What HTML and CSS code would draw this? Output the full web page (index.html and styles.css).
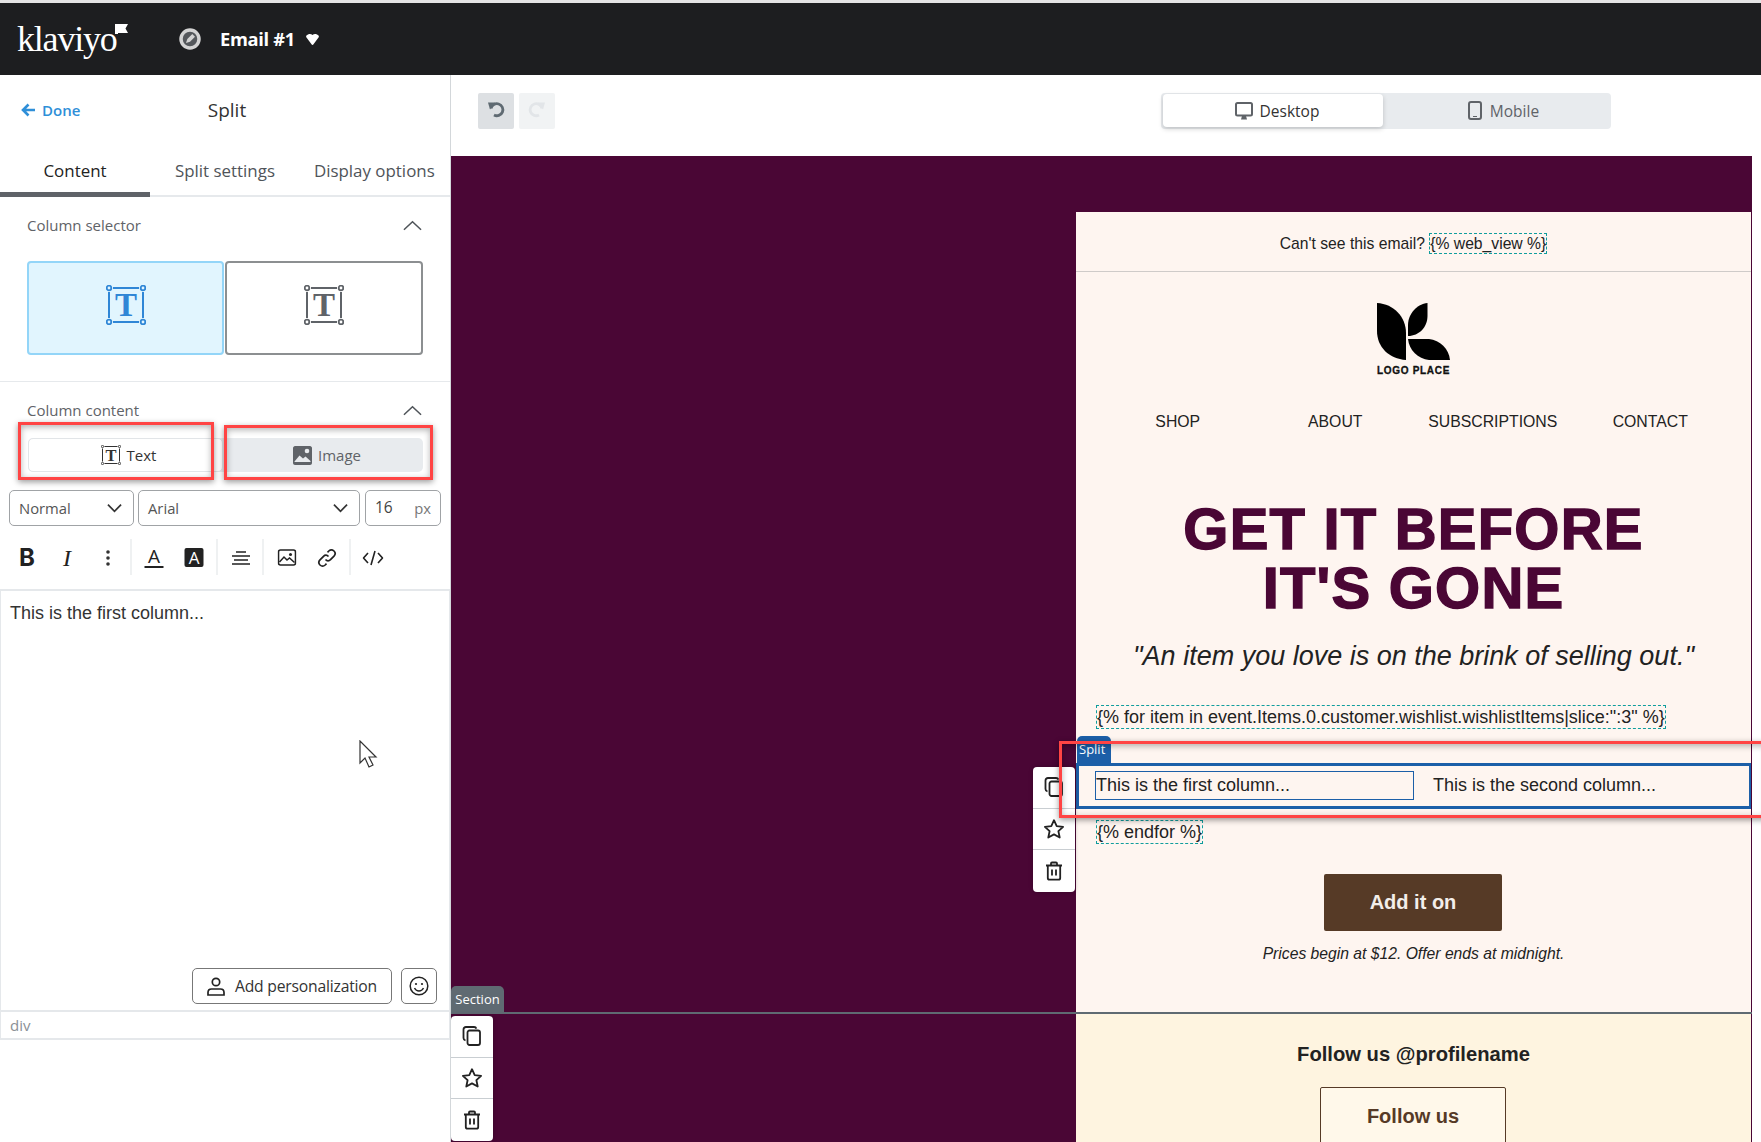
FILE: index.html
```html
<!DOCTYPE html>
<html>
<head>
    <meta charset="utf-8">
    <title>Email #1 - Klaviyo</title>
    <link rel="stylesheet" href="styles.css">
</head>
<body>
    <svg class="defs" width="0" height="0">
        <symbol id="i-tframe" viewBox="0 0 40 40">
            <g fill="none" stroke="currentColor" stroke-width="1.8">
                <circle cx="3" cy="3" r="2.300"/><circle cx="37" cy="3" r="2.300"/>
                <circle cx="3" cy="37" r="2.300"/><circle cx="37" cy="37" r="2.300"/>
                <path d="M7 3h26M7 37h26M3 7v26M37 7v26" stroke-width="2"/>
            </g>
        </symbol>
        <symbol id="i-copy" viewBox="0 0 20 20">
            <g fill="none" stroke="currentColor" stroke-width="1.8">
                <rect x="5.500" y="4.500" width="12.500" height="14.500" rx="2"/>
                <path d="M3.500 14.500C2 14 1.500 13 1.500 12V3.500C1.500 2 2.500 1 4 1h8c1 0 2 .5 2.400 1.600"/>
            </g>
        </symbol>
        <symbol id="i-star" viewBox="0 0 20 20">
            <path d="M10 1.200l2.700 5.900 6.400.7-4.700 4.400 1.300 6.300L10 15.400l-5.700 3.100 1.300-6.300L.9 7.800l6.400-.7z" fill="none" stroke="currentColor" stroke-width="1.800" stroke-linejoin="round"/>
        </symbol>
        <symbol id="i-trash" viewBox="0 0 20 20">
            <g fill="none" stroke="currentColor" stroke-width="1.8">
                <path d="M2 4.500h16M7 4.500V2.500c0-.6.400-1 1-1h4c.6 0 1 .4 1 1v2M3.800 4.500V17c0 1 .7 1.700 1.700 1.700h9c1 0 1.700-.7 1.700-1.700V4.500M8 8.500v6M12 8.500v6"/>
            </g>
        </symbol>
        <symbol id="i-chevron" viewBox="0 0 20 11">
            <path d="M1 10l9-8.500 9 8.500" fill="none" stroke="currentColor" stroke-width="1.600"/>
        </symbol>
        <symbol id="i-down" viewBox="0 0 16 10">
            <path d="M1 1.500l7 7 7-7" fill="none" stroke="currentColor" stroke-width="1.800"/>
        </symbol>
    </svg>

    <header class="topbar">
        <div class="brand">
            <span class="brand-name">klaviyo</span>
            <svg class="brand-flag" width="13" height="10" viewBox="0 0 13 10"><path d="M0 0h13l-2.500 4.500L13 9H3v1H0z" fill="#fff"/></svg>
        </div>
        <svg class="compass" width="22" height="22" viewBox="0 0 22 22">
            <circle cx="11" cy="11" r="9" fill="#55585c" stroke="#d4d4d4" stroke-width="3.500"/>
            <path d="M7 15l1.300-4 5-5 2.700 2.700-5 5z" fill="#d4d4d4"/>
        </svg>
        <span class="doc-name">Email #1</span>
        <svg width="13" height="11" viewBox="0 0 13 11"><path d="M2.500.3C3.800-.2 5.500.1 6.500 1c1-.9 2.700-1.200 4-.7 1.700.6 2.900 1.700 2.200 3L7.500 10.300c-.5.900-1.500.9-2 0L.3 3.300C-.4 2 .8.900 2.500.3z" fill="#fff"/></svg>
    </header>

    <div class="workspace">
        <aside class="panel">
            <div class="panel-head">
                <a class="done">
                    <svg width="15" height="14" viewBox="0 0 15 14"><path d="M14 7H2.500M7.500 1.500L2 7l5.500 5.500" fill="none" stroke="currentColor" stroke-width="2.600"/></svg>
                    Done
                </a>
                <h1 class="panel-title">Split</h1>
            </div>
            <nav class="tabs">
                <span class="tab tab-on">Content</span>
                <span class="tab tab-split">Split settings</span>
                <span class="tab tab-display">Display options</span>
            </nav>

            <section class="group group-columns">
                <div class="group-title">
                    <span>Column selector</span>
                    <svg width="19" height="11"><use href="#i-chevron"/></svg>
                </div>
                <div class="col-picker">
                    <div class="col-box col-box-on">
                        <svg width="40" height="40" viewBox="0 0 40 40"><use href="#i-tframe" width="40" height="40"/><text class="t-mark" x="20" y="31">T</text></svg>
                    </div>
                    <div class="col-box">
                        <svg width="40" height="40" viewBox="0 0 40 40"><use href="#i-tframe" width="40" height="40"/><text class="t-mark" x="20" y="31">T</text></svg>
                    </div>
                </div>
            </section>

            <section class="group group-content">
                <div class="group-title group-title-b">
                    <span>Column content</span>
                    <svg width="19" height="11"><use href="#i-chevron"/></svg>
                </div>
                <div class="kind">
                    <div class="kind-btn kind-on">
                        <svg width="20" height="20" viewBox="0 0 40 40"><use href="#i-tframe" width="40" height="40"/><text class="t-mark" x="20" y="31">T</text></svg>
                        Text
                    </div>
                    <div class="kind-btn">
                        <svg width="19" height="19" viewBox="0 0 19 19"><path d="M2 0h15c1 0 2 1 2 2v15c0 1-1 2-2 2H2c-1 0-2-1-2-2V2C0 1 1 0 2 0z" fill="#5f6368"/><path d="M1.500 15.500l5-6 3.500 3 2.500-2 5 4.500v1H1.500z" fill="#e8ebee"/><circle cx="14" cy="5" r="2.300" fill="#e8ebee"/></svg>
                        Image
                    </div>
                </div>
            </section>

            <div class="selects">
                <div class="select select-style"><span>Normal</span><svg width="15" height="10"><use href="#i-down"/></svg></div>
                <div class="select select-font"><span>Arial</span><svg width="15" height="10"><use href="#i-down"/></svg></div>
                <div class="select select-size"><span>16</span><span class="unit">px</span></div>
            </div>

            <div class="format">
                <span class="fmt fmt-b">B</span>
                <span class="fmt fmt-i">I</span>
                <svg class="fmt-more" width="4" height="16" viewBox="0 0 4 16"><circle cx="2" cy="2" r="1.800"/><circle cx="2" cy="8" r="1.800"/><circle cx="2" cy="14" r="1.800"/></svg>
                <i class="fmt-sep"></i>
                <span class="fmt-color">A</span>
                <span class="fmt-fill">A</span>
                <i class="fmt-sep sep-b"></i>
                <svg class="fmt-align" width="18" height="14" viewBox="0 0 18 14"><path d="M4 1h10M0 5h18M2 9h14M0 13h18" stroke="#222" stroke-width="1.600"/></svg>
                <i class="fmt-sep sep-c"></i>
                <svg class="fmt-img" width="19" height="17" viewBox="0 0 19 17"><rect x="1" y="1" width="17" height="15" rx="2" fill="none" stroke="#222" stroke-width="1.600"/><path d="M2 13l4.500-5 3 3 2.500-2 5 4.500" fill="none" stroke="#222" stroke-width="1.500"/><circle cx="13" cy="5.500" r="1.500" fill="#222"/></svg>
                <svg class="fmt-link" width="20" height="20" viewBox="0 0 20 20"><path d="M8.500 11.500c1.500 1.700 3.500 1.700 5 .2l3.500-3.500c1.400-1.500 1.400-3.700 0-5.200-1.500-1.400-3.700-1.400-5.200 0L10.500 4.300M11.500 8.500c-1.500-1.700-3.500-1.700-5-.2L3 11.800c-1.400 1.500-1.400 3.700 0 5.200 1.500 1.400 3.700 1.400 5.200 0l1.300-1.300" fill="none" stroke="#222" stroke-width="1.700"/></svg>
                <i class="fmt-sep sep-d"></i>
                <svg class="fmt-code" width="21" height="16" viewBox="0 0 21 16"><path d="M5.500 3L1 8l4.500 5M15.500 3L20 8l-4.500 5M12.500 1L8.500 15" fill="none" stroke="#222" stroke-width="1.600"/></svg>
            </div>

            <div class="editor">
                <div class="editor-body">
                    <p class="editor-text">This is the first column...</p>
                    <div class="editor-actions">
                        <span class="btn-person">
                            <svg width="18" height="19" viewBox="0 0 18 19"><circle cx="9" cy="5" r="3.700" fill="none" stroke="#222" stroke-width="1.700"/><path d="M1 18v-2.500c0-2 1.500-3.500 3.500-3.500h9c2 0 3.500 1.500 3.500 3.500V18z" fill="none" stroke="#222" stroke-width="1.700"/></svg>
                            Add personalization
                        </span>
                        <span class="btn-emoji">
                            <svg width="20" height="20" viewBox="0 0 20 20"><circle cx="10" cy="10" r="8.800" fill="none" stroke="#222" stroke-width="1.500"/><circle cx="7" cy="8" r="1.100" fill="#222"/><circle cx="13" cy="8" r="1.100" fill="#222"/><path d="M5.500 12c1 2 2.700 3 4.500 3s3.500-1 4.500-3" fill="none" stroke="#222" stroke-width="1.400"/></svg>
                        </span>
                    </div>
                </div>
                <div class="editor-path">div</div>
            </div>
        </aside>

        <main class="stage">
            <div class="stage-bar">
                <span class="hist hist-on">
                    <svg width="18" height="18" viewBox="0 0 18 18"><path d="M4 7.500A6 6 0 1 1 7 14" fill="none" stroke="#5f6a72" stroke-width="2.800"/><path d="M1 1.500h7L3 8.500z" fill="#5f6a72"/></svg>
                </span>
                <span class="hist">
                    <svg width="18" height="18" viewBox="0 0 18 18"><path d="M14 7.500A6 6 0 1 0 11 14" fill="none" stroke="#e2e5e8" stroke-width="2.800"/><path d="M17 1.500h-7l5 7z" fill="#e2e5e8"/></svg>
                </span>
                <div class="device">
                    <span class="device-tab device-on">
                        <svg width="18" height="18" viewBox="0 0 18 18"><rect x="1" y="1" width="16" height="12.500" rx="1.500" fill="none" stroke="#5f6368" stroke-width="2"/><path d="M6 17.500h6l-1-3.500H7z" fill="#5f6368"/></svg>
                        Desktop
                    </span>
                    <span class="device-tab device-off">
                        <svg width="14" height="19" viewBox="0 0 14 19"><rect x="1" y="1" width="12" height="17" rx="2" fill="none" stroke="#5f6368" stroke-width="2"/><path d="M5 15.500h4" stroke="#5f6368"/></svg>
                        Mobile
                    </span>
                </div>
            </div>

            <div class="canvas">
                <div class="canvas-row row-main">
                    <div class="email">
                        <div class="preheader">Can't see this email? <span class="tag">{% web_view %}</span></div>

                        <div class="logo">
                            <svg width="73" height="57" viewBox="0 0 73 57">
                                <path d="M0 0C17 1 29 14 29 30V57C12 56 0 44 0 28Z"/>
                                <path d="M50.500 0C40 1 31 11 31 22V33C42 33 50.500 24 50.500 13Z"/>
                                <path d="M31 36H52C63 37 72 46 73 57H52C41 56 32 47 31 36Z"/>
                            </svg>
                            <span class="logo-name">LOGO PLACE</span>
                        </div>

                        <div class="email-nav">
                            <span>SHOP</span><span>ABOUT</span><span>SUBSCRIPTIONS</span><span>CONTACT</span>
                        </div>

                        <h2 class="headline">GET IT BEFORE<br>IT'S GONE</h2>
                        <p class="quote">"An item you love is on the brink of selling out."</p>

                        <div class="for-row"><span class="tag">{% for item in event.Items.0.customer.wishlist.wishlistItems|slice:":3" %}</span></div>

                        <div class="split">
                            <span class="split-label">Split</span>
                            <div class="split-col split-col-on">This is the first column...</div>
                            <div class="split-col">This is the second column...</div>
                            <div class="tools tools-split">
                                <span class="tool"><svg width="20" height="20"><use href="#i-copy"/></svg></span>
                                <span class="tool"><svg width="20" height="20"><use href="#i-star"/></svg></span>
                                <span class="tool"><svg width="20" height="20"><use href="#i-trash"/></svg></span>
                            </div>
                        </div>

                        <div class="end-row"><span class="tag">{% endfor %}</span></div>

                        <a class="cta">Add it on</a>
                        <p class="small">Prices begin at $12. Offer ends at midnight.</p>
                    </div>
                </div>

                <div class="canvas-row row-follow">
                    <span class="section-label">Section</span>
                    <div class="tools tools-section">
                        <span class="tool"><svg width="20" height="20"><use href="#i-copy"/></svg></span>
                        <span class="tool"><svg width="20" height="20"><use href="#i-star"/></svg></span>
                        <span class="tool"><svg width="20" height="20"><use href="#i-trash"/></svg></span>
                    </div>
                    <div class="follow">
                        <p class="follow-title">Follow us @profilename</p>
                        <a class="follow-btn">Follow us</a>
                    </div>
                </div>
            </div>
        </main>
    </div>

    <!-- annotations on the screenshot -->
    <div class="mark mark-text"></div>
    <div class="mark mark-image"></div>
    <div class="mark mark-split"></div>
    <svg class="pointer" width="20" height="28" viewBox="0 0 20 28"><path d="M1 1v22l5-5 4 9 4-2-4-8h7z" fill="#fff" stroke="#333" stroke-width="1.200"/></svg>
</body>
</html>
```

FILE: styles.css
```css
*{
    box-sizing: border-box;
}
html, body{
    margin: 0;
    height: 100%;
}
body{
    position: relative;
    height: 1142px;
    overflow: hidden;
    background: #fff;
    color: #222;
    font-family: "Open Sans", sans-serif;
    border-top: 3px solid #e4e4e4;
}
.defs{
    position: absolute;
}
p, h1, h2{
    margin: 0;
    font-weight: normal;
}

/* top bar */
.topbar{
    display: flex;
    align-items: center;
    height: 72px;
    padding-left: 17px;
    background: #1d1e20;
    color: #fff;
}
.brand{
    display: flex;
    align-items: flex-start;
    width: 162px;
}
.brand-name{
    font-family: "Liberation Serif", serif;
    font-size: 36px;
    line-height: 44px;
    letter-spacing: -1.200px;
}
.brand-flag{
    margin: 7px 0 0 -2px;
}
.doc-name{
    margin: -2px 11px 0 19px;
    font-size: 18.300px;
    font-weight: 700;
    letter-spacing: -.3px;
}

.workspace{
    display: flex;
    height: 1067px;
}

/* left panel */
.panel{
    width: 451px;
    flex: none;
    border-right: 1px solid #d3d7da;
}
.panel-head{
    position: relative;
    display: flex;
    align-items: center;
    justify-content: center;
    height: 70px;
}
.done{
    position: absolute;
    left: 21px;
    display: flex;
    align-items: center;
    gap: 6px;
    color: #2f8fd8;
    font-size: 15px;
    font-weight: 600;
}
.panel-title{
    margin-left: 4px;
    font-size: 19px;
    color: #333;
}
.tabs{
    display: flex;
    height: 52px;
    border-bottom: 2px solid #e6e9ec;
}
.tab{
    font-size: 16.900px;
    line-height: 52px;
    color: #4f5459;
}
.tab-on{
    width: 150px;
    height: 52px;
    border-bottom: 5px solid #5f6368;
    text-align: center;
    color: #222;
}
.tab-split{
    margin-left: 25px;
}
.tab-display{
    margin-left: 39px;
}

.t-mark{
    font-family: "Liberation Serif", serif;
    font-size: 33px;
    font-weight: 700;
    text-anchor: middle;
    fill: currentColor;
}

.group{
    padding: 0 27px;
}
.group-columns{
    height: 185px;
    border-bottom: 1px solid #e6e9ec;
}
.group-title{
    display: flex;
    align-items: center;
    justify-content: space-between;
    height: 56px;
    font-size: 15px;
    color: #5f6368;
}
.group-title svg{
    color: #4f5459;
    margin-right: 1px;
}
.col-picker{
    display: flex;
    gap: 1px;
    margin-top: 8px;
}
.col-box{
    display: flex;
    align-items: center;
    justify-content: center;
    width: 198px;
    height: 94px;
    padding-bottom: 7px;
    border: 2px solid #8c8f91;
    border-radius: 4px;
    color: #5f6368;
}
.col-box-on{
    width: 197px;
    border-color: #93d5f8;
    background: #e1f5fe;
    color: #2f86d6;
}
.kind{
    display: flex;
    height: 34px;
    margin-left: 1px;
    border-radius: 5px;
    background: #e8ebee;
}
.kind-btn{
    display: flex;
    align-items: center;
    justify-content: center;
    gap: 6px;
    width: 200px;
    padding-left: 8px;
    font-size: 15px;
    color: #5f6368;
}
.kind-on{
    width: 195px;
    padding-left: 6px;
    background: #fff;
    border: 1px solid #e2e5e8;
    border-radius: 5px;
    color: #333;
    font-weight: 500;
}

.selects{
    display: flex;
    gap: 4px;
    margin-top: 18px;
    padding-left: 9px;
}
.select{
    display: flex;
    align-items: center;
    justify-content: space-between;
    height: 36px;
    border: 1px solid #a0a3a6;
    border-radius: 5px;
    padding: 0 11px 0 9px;
    font-size: 14.800px;
    color: #555;
}
.select svg{
    color: #333;
}
.select-style{
    width: 125px;
}
.select-font{
    width: 222px;
}
.select-size{
    width: 76px;
    margin-left: 1px;
}
.select-size span:first-child{
    color: #444;
    font-size: 15.500px;
    margin-top: -2px;
}
.unit{
    color: #777;
    margin-right: -2px;
}

.format{
    position: relative;
    display: flex;
    align-items: center;
    height: 63px;
    color: #222;
}
.format > *{
    position: absolute;
    transform: translate(-50%, 0);
}
.fmt{
    font-size: 24px;
    line-height: 26px;
}
.fmt-b{
    left: 27px;
    font-family: "Inter", sans-serif;
    font-weight: 700;
}
.fmt-i{
    left: 67px;
    font-family: "Liberation Serif", serif;
    font-style: italic;
}
.fmt-more{
    left: 108px;
    fill: #333;
}
.fmt-sep{
    left: 131px;
    top: 13px;
    width: 1px;
    height: 36px;
    background: #e0e3e6;
}
.sep-b{
    left: 217px;
}
.sep-c{
    left: 263px;
}
.sep-d{
    left: 350px;
}
.fmt-color{
    left: 154px;
    width: 19px;
    height: 20px;
    font-size: 19px;
    line-height: 17px;
    text-align: center;
    border-bottom: 2px solid #222;
}
.fmt-fill{
    left: 194px;
    width: 19px;
    height: 19px;
    border-radius: 2px;
    background: #222;
    color: #fff;
    font-size: 17px;
    line-height: 19px;
    text-align: center;
}
.fmt-align{
    left: 241px;
}
.fmt-img{
    left: 287px;
}
.fmt-link{
    left: 327px;
}
.fmt-code{
    left: 373px;
}

.editor{
    display: flex;
    flex-direction: column;
    height: 451px;
    border: 2px solid #e5e8eb;
    border-right-width: 1px;
    border-left-width: 1px;
}
.editor-body{
    flex: 1;
    display: flex;
    flex-direction: column;
    justify-content: space-between;
    padding: 10px 12px 6px 9px;
}
.editor-text{
    font-family: "Liberation Sans", sans-serif;
    font-size: 18px;
    line-height: 24px;
    color: #333;
}
.editor-actions{
    display: flex;
    justify-content: flex-end;
    gap: 9px;
}
.btn-person, .btn-emoji{
    display: flex;
    align-items: center;
    justify-content: center;
    height: 36px;
    border: 1px solid #777;
    border-radius: 5px;
}
.btn-person{
    gap: 10px;
    width: 200px;
    font-size: 15.700px;
    letter-spacing: -.2px;
    color: #333;
}
.btn-emoji{
    width: 36px;
}
.editor-path{
    height: 28px;
    padding-left: 9px;
    border-top: 2px solid #e5e8eb;
    font-size: 15px;
    line-height: 27px;
    color: #8b9096;
}

/* canvas side */
.stage{
    flex: 1;
    display: flex;
    flex-direction: column;
    min-width: 0;
}
.stage-bar{
    display: flex;
    gap: 5px;
    height: 81px;
    padding: 18px 150px 0 27px;
}
.hist{
    display: flex;
    align-items: center;
    justify-content: center;
    width: 36px;
    height: 36px;
    padding-bottom: 2px;
    border-radius: 2px;
    background: #f1f3f4;
}
.hist-on{
    background: #dde0e3;
}
.device{
    display: flex;
    width: 450px;
    height: 36px;
    margin-left: auto;
    padding: 1px 0 2px 2px;
    border-radius: 4px;
    background: #e8ebee;
}
.device-tab{
    flex: 1;
    display: flex;
    align-items: center;
    justify-content: center;
    gap: 7px;
    font-size: 15.500px;
    color: #5f6368;
}
.device-on{
    flex: none;
    width: 220px;
    padding-left: 8px;
    border-radius: 4px;
    background: #fff;
    box-shadow: 0 2px 5px rgba(0,0,0,.18);
    color: #333;
}
.device-off{
    gap: 8px;
    padding-left: 13px;
}

.canvas{
    flex: 1;
    margin-right: 9px;
    overflow: hidden;
    background: #4a0635;
    font-family: "Liberation Sans", sans-serif;
}
.canvas-row{
    position: relative;
    display: flex;
    justify-content: flex-end;
    padding-right: 1px;
}
.row-main{
    height: 856px;
    padding-top: 56px;
}
.email{
    width: 675px;
    background: #fef5f0;
    color: #222;
    text-align: center;
}
.preheader{
    height: 60px;
    padding-top: 22px;
    border-bottom: 1px solid #cfcbc9;
    font-size: 15.700px;
    line-height: 20px;
}
.tag{
    padding: 1px 0;
    border: 1px dashed #0f9d9d;
}
.logo{
    display: flex;
    flex-direction: column;
    align-items: center;
    gap: 5px;
    padding-top: 31px;
}
.logo-name{
    font-size: 10px;
    font-weight: 700;
    letter-spacing: .7px;
    line-height: 12px;
    color: #111;
    -webkit-text-stroke: .3px #111;
}
.email-nav{
    display: grid;
    grid-template-columns: repeat(4, 157.500px);
    margin-top: 35px;
    padding-left: 23px;
    font-size: 15.800px;
    line-height: 20px;
}
.headline{
    margin-top: 68px;
    font-size: 58px;
    font-weight: 700;
    line-height: 58.500px;
    color: #4a0635;
    letter-spacing: 1.200px;
    -webkit-text-stroke: 1.400px #4a0635;
}
.quote{
    margin-top: 22px;
    font-size: 27px;
    font-style: italic;
    line-height: 34px;
}
.for-row, .end-row{
    padding-left: 20px;
    text-align: left;
    font-size: 18px;
    line-height: 20px;
}
.for-row{
    margin-top: 34px;
}
.split{
    position: relative;
    display: flex;
    height: 46px;
    margin-top: 36px;
    padding: 5px 0 0 16px;
    border: 3px solid #1c5fa8;
    border-right-width: 2px;
    text-align: left;
    font-size: 18px;
}
.split-label{
    position: absolute;
    left: -2px;
    top: -30px;
    width: 34px;
    height: 27px;
    padding: 5px 0 0 2px;
    border-radius: 5px 5px 0 0;
    background: #1c5fa8;
    color: #fff;
    font-family: "Open Sans", sans-serif;
    font-size: 13px;
    line-height: 16px;
}
.split-col{
    width: 319px;
    height: 29px;
    padding-left: 19px;
    line-height: 29px;
}
.split-col-on{
    padding-left: 0;
    border: 1px solid #1c5fa8;
    line-height: 27px;
}
.tools{
    position: absolute;
    display: flex;
    flex-direction: column;
    width: 42px;
    border-radius: 4px;
    background: #fff;
    box-shadow: 0 0 4px rgba(0,0,0,.25);
    color: #222;
}
.tools-split{
    left: -46px;
    top: 1px;
}
.tool{
    display: flex;
    align-items: center;
    justify-content: center;
    height: 41.500px;
    border-bottom: 1px solid #c9ced2;
}
.tool:last-child{
    border-bottom: 0;
}
.end-row{
    margin-top: 13px;
}
.cta{
    display: block;
    width: 178px;
    height: 57px;
    margin: 32px 0 0 248px;
    border-radius: 2px;
    background: #563a26;
    color: #f3eeea;
    font-size: 20px;
    font-weight: 700;
    line-height: 57px;
}
.small{
    margin-top: 13px;
    font-size: 15.700px;
    font-style: italic;
    line-height: 20px;
}

.row-follow{
    border-top: 2px solid #5f6a72;
}
.section-label{
    position: absolute;
    left: 0;
    top: -28px;
    width: 53px;
    height: 27px;
    border-radius: 5px 5px 0 0;
    background: #5f6a72;
    color: #fff;
    font-family: "Open Sans", sans-serif;
    font-size: 13px;
    line-height: 26px;
    text-align: center;
}
.tools-section{
    left: 0;
    top: 2px;
    height: 125px;
}
.follow{
    width: 675px;
    height: 200px;
    padding-top: 28px;
    background: #fef4e0;
    text-align: center;
}
.follow-title{
    font-size: 20.200px;
    font-weight: 700;
    line-height: 24px;
}
.follow-btn{
    display: block;
    width: 186px;
    height: 70px;
    margin: 21px 0 0 244px;
    border: 1px solid #563a26;
    border-radius: 2px;
    background: #fff8ea;
    color: #563a26;
    font-size: 20px;
    font-weight: 700;
    line-height: 56px;
}

/* red boxes and mouse pointer drawn over the shot */
.mark{
    position: absolute;
    border: 3px solid #ff4444;
    box-shadow: 0 2px 6px rgba(0,0,0,.4), inset 0 2px 6px rgba(0,0,0,.3);
}
.mark-text{
    left: 18px;
    top: 419px;
    width: 196px;
    height: 58px;
}
.mark-image{
    left: 224px;
    top: 422px;
    width: 209px;
    height: 55px;
}
.mark-split{
    left: 1059px;
    top: 738px;
    width: 710px;
    height: 77px;
}
.pointer{
    position: absolute;
    left: 359px;
    top: 737px;
}
```
